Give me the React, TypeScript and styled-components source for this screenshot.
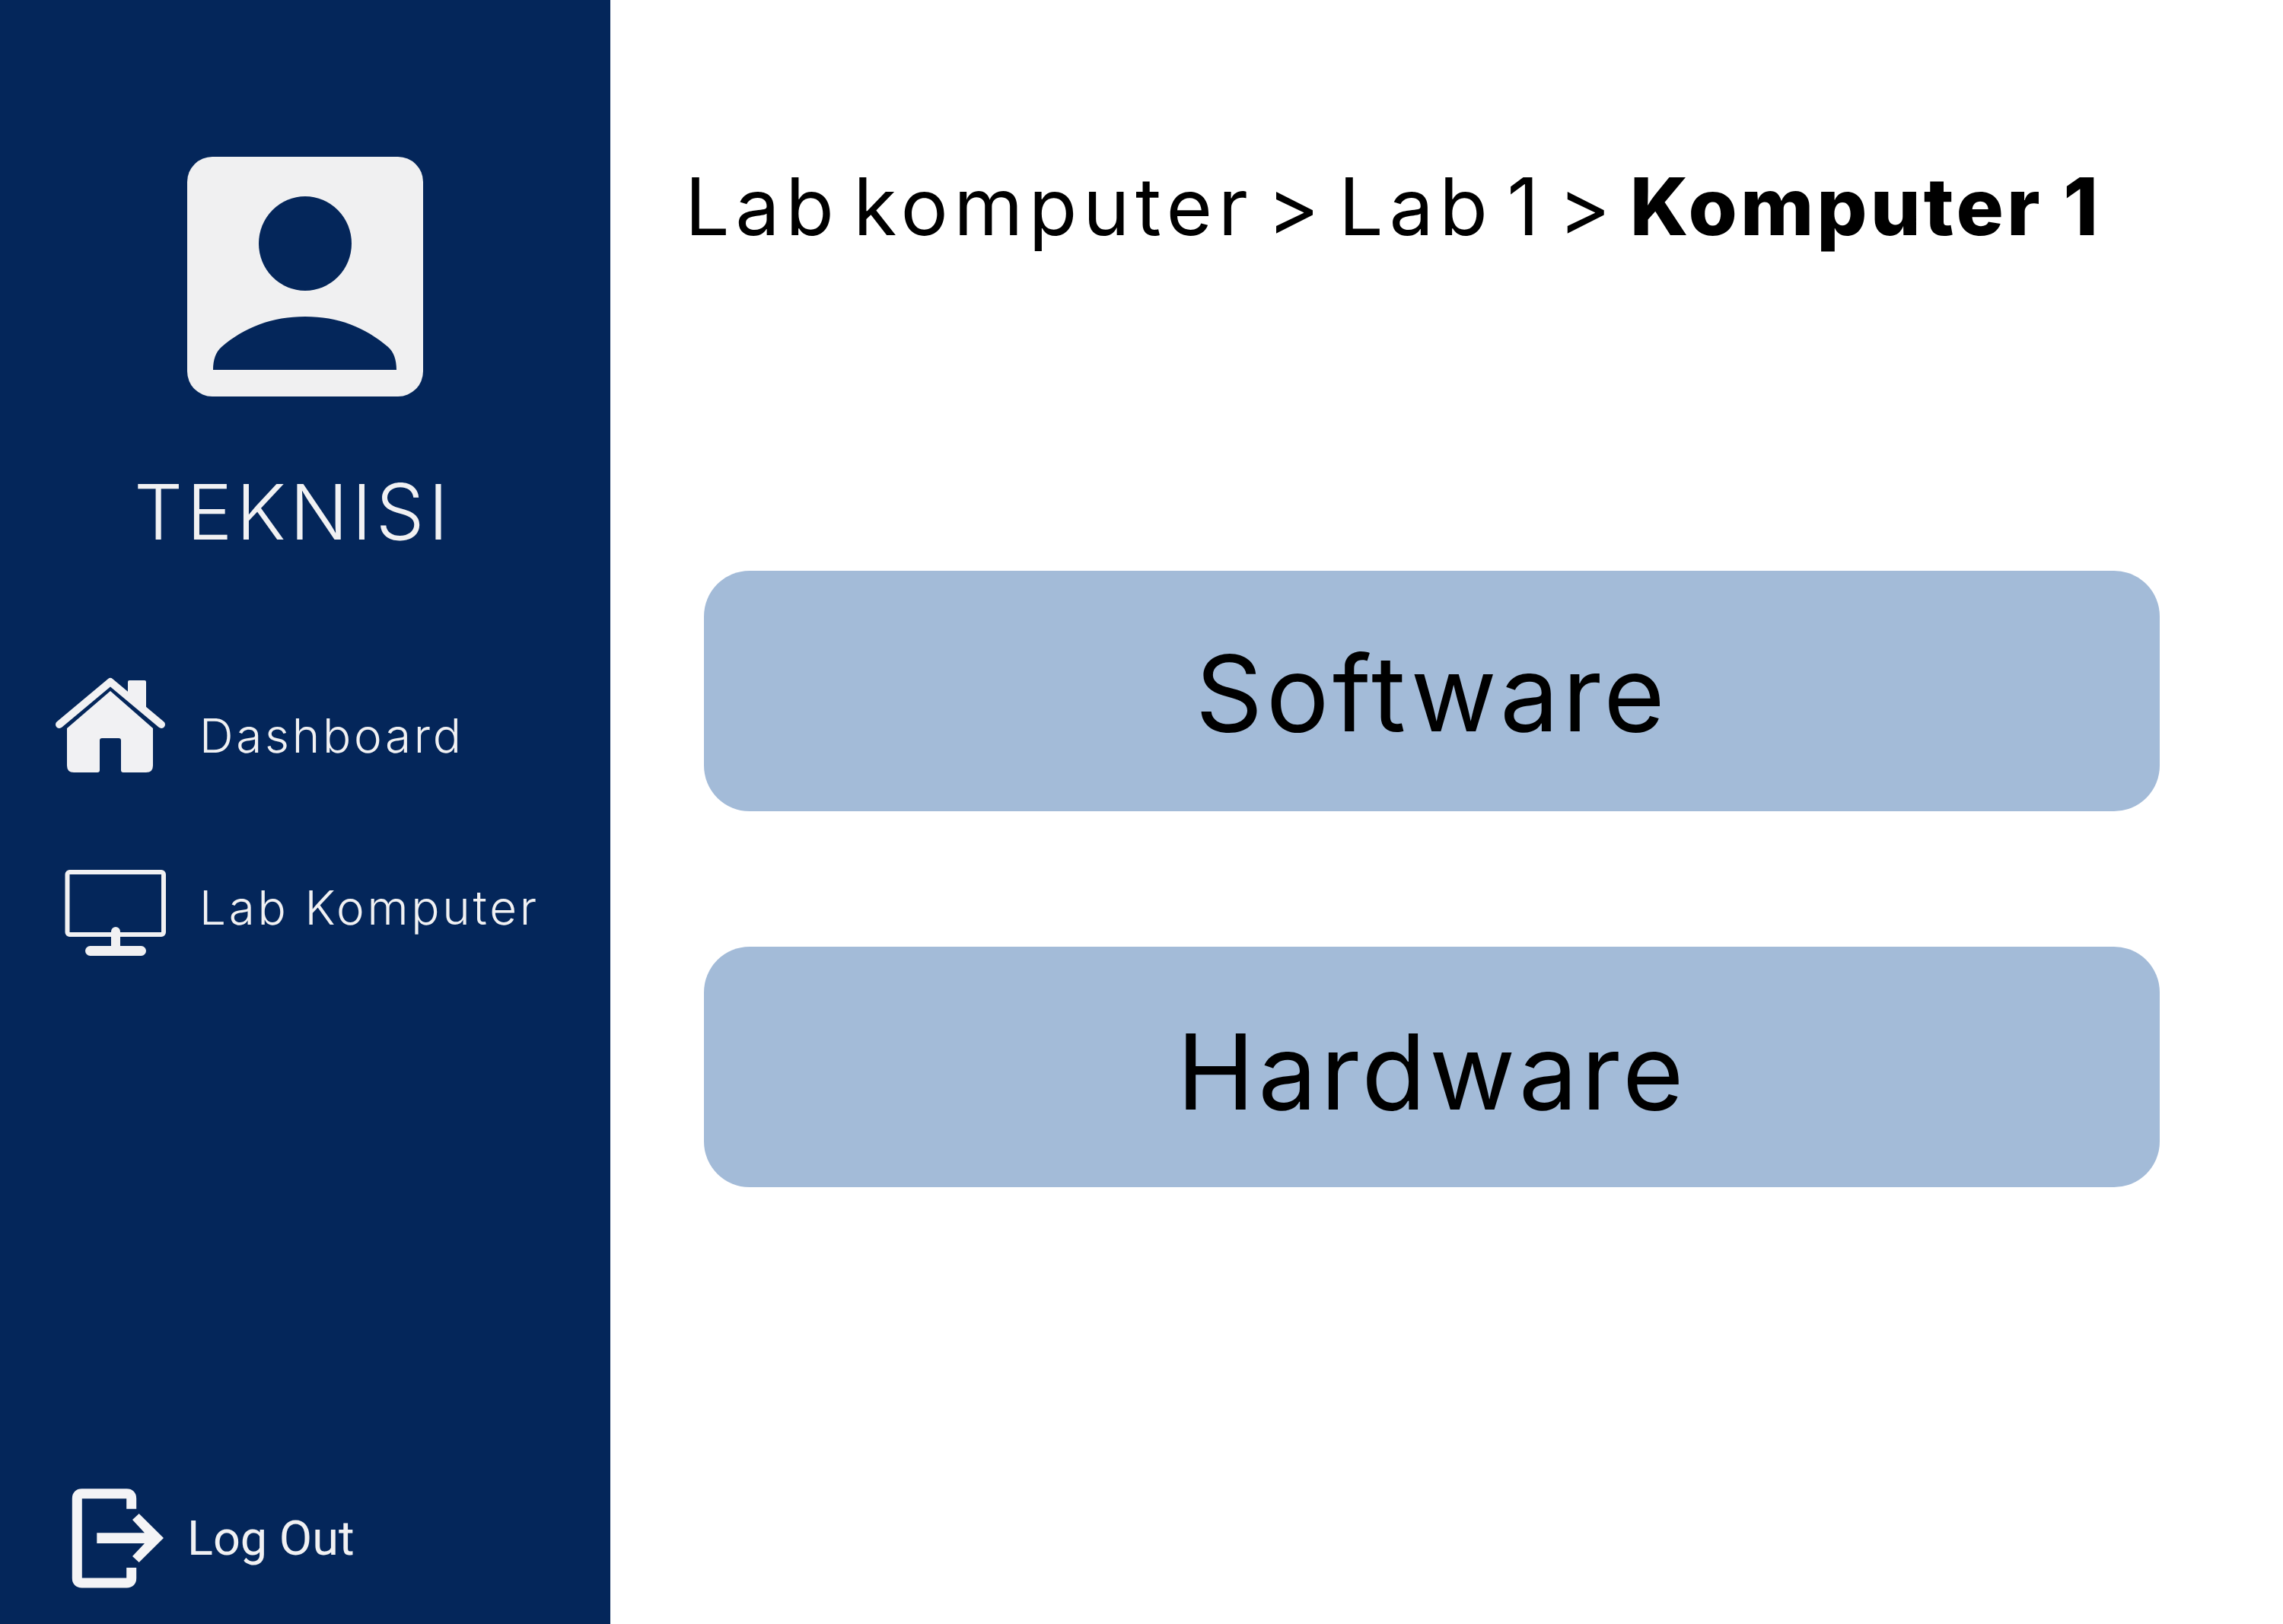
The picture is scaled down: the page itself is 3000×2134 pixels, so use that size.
import * as React from 'react';
import styled, { createGlobalStyle } from 'styled-components';

const GlobalStyle = createGlobalStyle`
    html, body {
        margin: 0;
        padding: 0;
        background: #fff;
    }
    body {
        font-family: "Inter", "Open Sans", sans-serif;
    }
`;

const Page = styled.div`
    display: flex;
    width: 3000px;
    height: 2134px;
    overflow: hidden;
`;

const Sidebar = styled.aside`
    display: flex;
    flex-direction: column;
    align-items: flex-start;
    flex: 0 0 802px;
    box-sizing: border-box;
    height: 100%;
    padding-top: 206px;
    background: #04265a;
    color: #f1f1f3;
`;

const AvatarIcon = styled.svg`
    display: block;
    width: 310px;
    height: 315px;
    margin-left: 246px;
`;

const RoleLabel = styled.div`
    margin: 90px 0 0 176px;
    font-size: 101px;
    line-height: 122px;
    font-weight: 300;
    letter-spacing: 5px;
    white-space: nowrap;
`;

const NavList = styled.nav`
    display: flex;
    flex-direction: column;
    gap: 120px;
    margin-top: 151px;
`;

const NavRow = styled.div`
    display: flex;
    align-items: flex-start;
    gap: 42px;
    padding-left: 70px;
`;

const NavIcon = styled.svg`
    display: block;
    flex: none;
    width: 150px;
    height: 135px;
`;

const NavLabel = styled.span<{ $drop: number }>`
    margin-top: ${(p) => p.$drop}px;
    font-size: 62px;
    line-height: 80px;
    font-weight: 300;
    letter-spacing: 3.7px;
    white-space: nowrap;
`;

const LogoutRow = styled.div`
    display: flex;
    align-items: center;
    gap: 26px;
    margin-top: auto;
    padding: 0 0 43px 90px;
`;

const LogoutIcon = styled.svg`
    display: block;
    flex: none;
    width: 130px;
    height: 140px;
`;

const LogoutLabel = styled.span`
    padding-top: 2px;
    font-family: "Roboto", sans-serif;
    font-size: 63px;
    line-height: 80px;
    white-space: nowrap;
`;

const Main = styled.main`
    display: flex;
    flex-direction: column;
    flex: 1;
    padding: 196px 0 0 98px;
`;

const Breadcrumb = styled.h1`
    margin: 0;
    font-size: 104px;
    line-height: 150px;
    font-weight: 400;
    letter-spacing: 7.5px;
    word-spacing: -19px;
    color: #000;
    white-space: nowrap;

    b {
        font-weight: 800;
        letter-spacing: 4px;
        word-spacing: 0;
    }
`;

const ChoiceList = styled.div`
    display: flex;
    flex-direction: column;
    gap: 178px;
    margin: 404px 0 0 25px;
`;

const Choice = styled.button<{ $textDrop: number }>`
    display: flex;
    align-items: center;
    justify-content: center;
    box-sizing: border-box;
    width: 1913px;
    height: 316px;
    padding: ${(p) => p.$textDrop}px 0 0;
    border: 0;
    border-radius: 60px;
    background: #a3bbd8;
    color: #000;
    font-family: inherit;
    font-size: 138px;
    font-weight: 400;
    letter-spacing: 4.5px;
`;

function Avatar() {
    return (
        <AvatarIcon viewBox="0 0 310 315">
            <rect width="310" height="315" rx="33" fill="#f0f0f1" />
            <ellipse cx="155" cy="114" rx="61" ry="62" fill="#04265a" />
            <path d="M34 280C34 266 38 256 45 250C75 224 112 210 155 210C198 210 234 224 264 250C271 256 275 266 275 280Z" fill="#04265a" />
        </AvatarIcon>
    );
}

function HomeIcon() {
    return (
        <NavIcon viewBox="0 0 150 135" fill="#f1f1f3">
            <path d="M98 29V12q0-2 2-2H120q2 0 2 2V50Z" />
            <path d="M8 68L75 12L142 68" fill="none" stroke="#f1f1f3" strokeWidth="10" strokeLinecap="round" strokeLinejoin="round" />
            <path d="M75 24L18 73V122q0 9 9 9H58q3 0 3-3V89q0-3 3-3H86q3 0 3 3V128q0 3 3 3H122q9 0 9-9V73Z" />
        </NavIcon>
    );
}

function MonitorIcon() {
    return (
        <NavIcon viewBox="0 0 150 135" fill="#f1f1f3">
            <rect x="18.5" y="7" width="126.5" height="82" rx="3" fill="none" stroke="#f1f1f3" strokeWidth="6" />
            <rect x="76" y="79" width="12" height="32" rx="6" />
            <rect x="42" y="104" width="80" height="13" rx="6.5" />
        </NavIcon>
    );
}

function ExitIcon() {
    return (
        <LogoutIcon viewBox="0 0 130 140" fill="#f4f4f6">
            <path d="M82.7 31.7V18q0-6.3-6.3-6.3H17.6q-6.3 0-6.3 6.3V122.7q0 6.3 6.3 6.3H76.4q6.3 0 6.3-6.3V109" fill="none" stroke="#f4f4f6" strokeWidth="13" />
            <polygon points="37.3,63.3 100,63.3 84,46 92.7,38 125,70 92.7,102 84,94 100,77 37.3,77" />
        </LogoutIcon>
    );
}

export default function App() {
    return (
        <Page>
            <GlobalStyle />
            <Sidebar>
                <Avatar />
                <RoleLabel>TEKNISI</RoleLabel>
                <NavList>
                    <NavRow>
                        <HomeIcon />
                        <NavLabel $drop={43}>Dashboard</NavLabel>
                    </NavRow>
                    <NavRow>
                        <MonitorIcon />
                        <NavLabel $drop={14}>Lab Komputer</NavLabel>
                    </NavRow>
                </NavList>
                <LogoutRow>
                    <ExitIcon />
                    <LogoutLabel>Log Out</LogoutLabel>
                </LogoutRow>
            </Sidebar>
            <Main>
                <Breadcrumb>Lab komputer &gt; Lab 1 &gt; <b>Komputer 1</b></Breadcrumb>
                <ChoiceList>
                    <Choice $textDrop={4}>Software</Choice>
                    <Choice $textDrop={10}>Hardware</Choice>
                </ChoiceList>
            </Main>
        </Page>
    );
}
